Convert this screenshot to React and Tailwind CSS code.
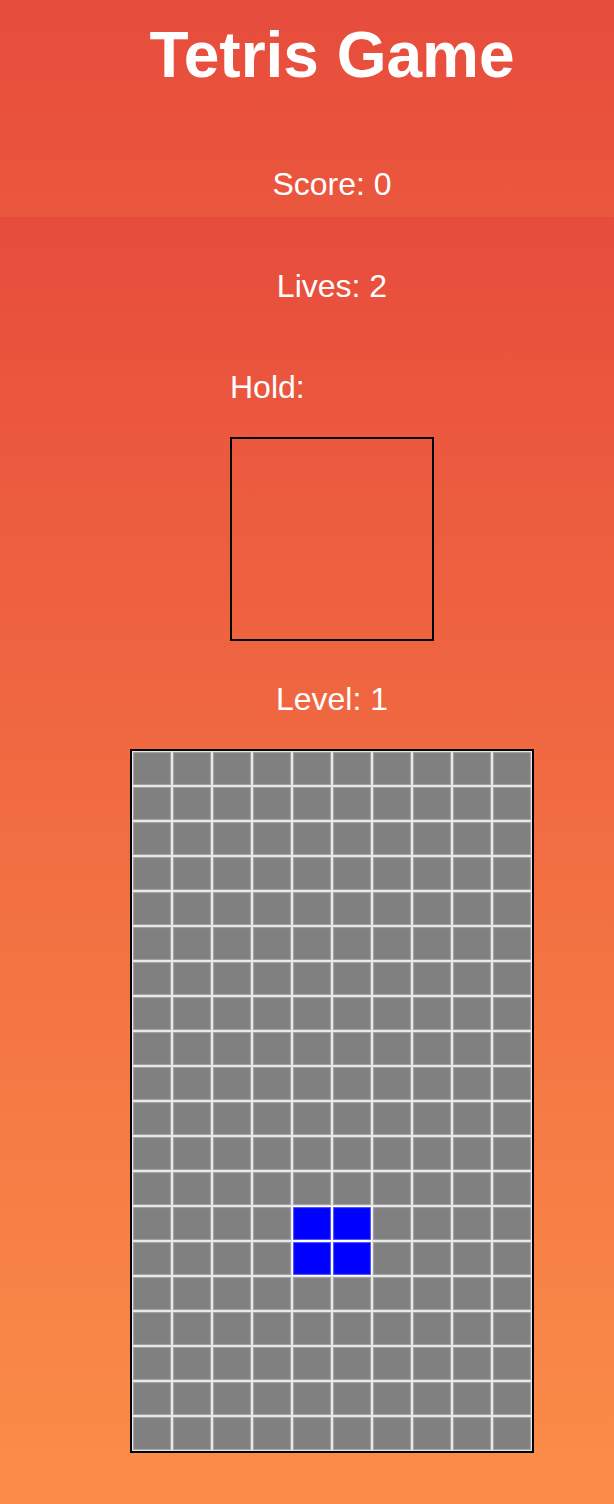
import React from "react";

const ROWS = 20;
const COLS = 10;
const filled = new Set(["13-4", "13-5", "14-4", "14-5"]);

export default function App() {
  const cells = [];
  for (let r = 0; r < ROWS; r++) {
    for (let c = 0; c < COLS; c++) {
      const on = filled.has(`${r}-${c}`);
      cells.push(
        <div
          key={`${r}-${c}`}
          className={
            on
              ? "bg-[#0000ff] border border-white shadow-[inset_0_0_1px_1px_rgba(255,255,255,0.35)]"
              : "bg-[#808080] border border-[#e8e8e8] shadow-[inset_0_0_1px_1px_rgba(255,255,255,0.3)]"
          }
        />
      );
    }
  }

  return (
    <div className="w-full min-h-[1504px] bg-linear-to-b from-[#e74c3c] to-[#fd8e47] font-['Liberation_Sans',Arial,sans-serif] text-white">
      <header className="h-[217px] pt-[19px] pl-[50px] text-center">
        <h1 className="text-[64px] font-bold leading-[72px]">Tetris Game</h1>
        <p className="mt-[75px] text-[32px] leading-[36px]">Score: 0</p>
      </header>
      <main className="h-[1287px] bg-linear-to-b from-[#e74c3c] to-[#fb8d48] flex flex-col items-center pt-[51px] pl-[50px]">
        <p className="text-[32px] leading-[36px]">Lives: 2</p>
        <div className="mt-[65px] w-[204px]">
          <p className="text-[32px] leading-[36px] text-left">Hold:</p>
          <div className="mt-[32px] w-[204px] h-[204px] border-2 border-black" />
        </div>
        <p className="mt-[40px] text-[32px] leading-[36px]">Level: 1</p>
        <div className="mt-[32px] border-2 border-black grid grid-cols-[repeat(10,40px)] grid-rows-[repeat(20,35px)]">
          {cells}
        </div>
      </main>
    </div>
  );
}
